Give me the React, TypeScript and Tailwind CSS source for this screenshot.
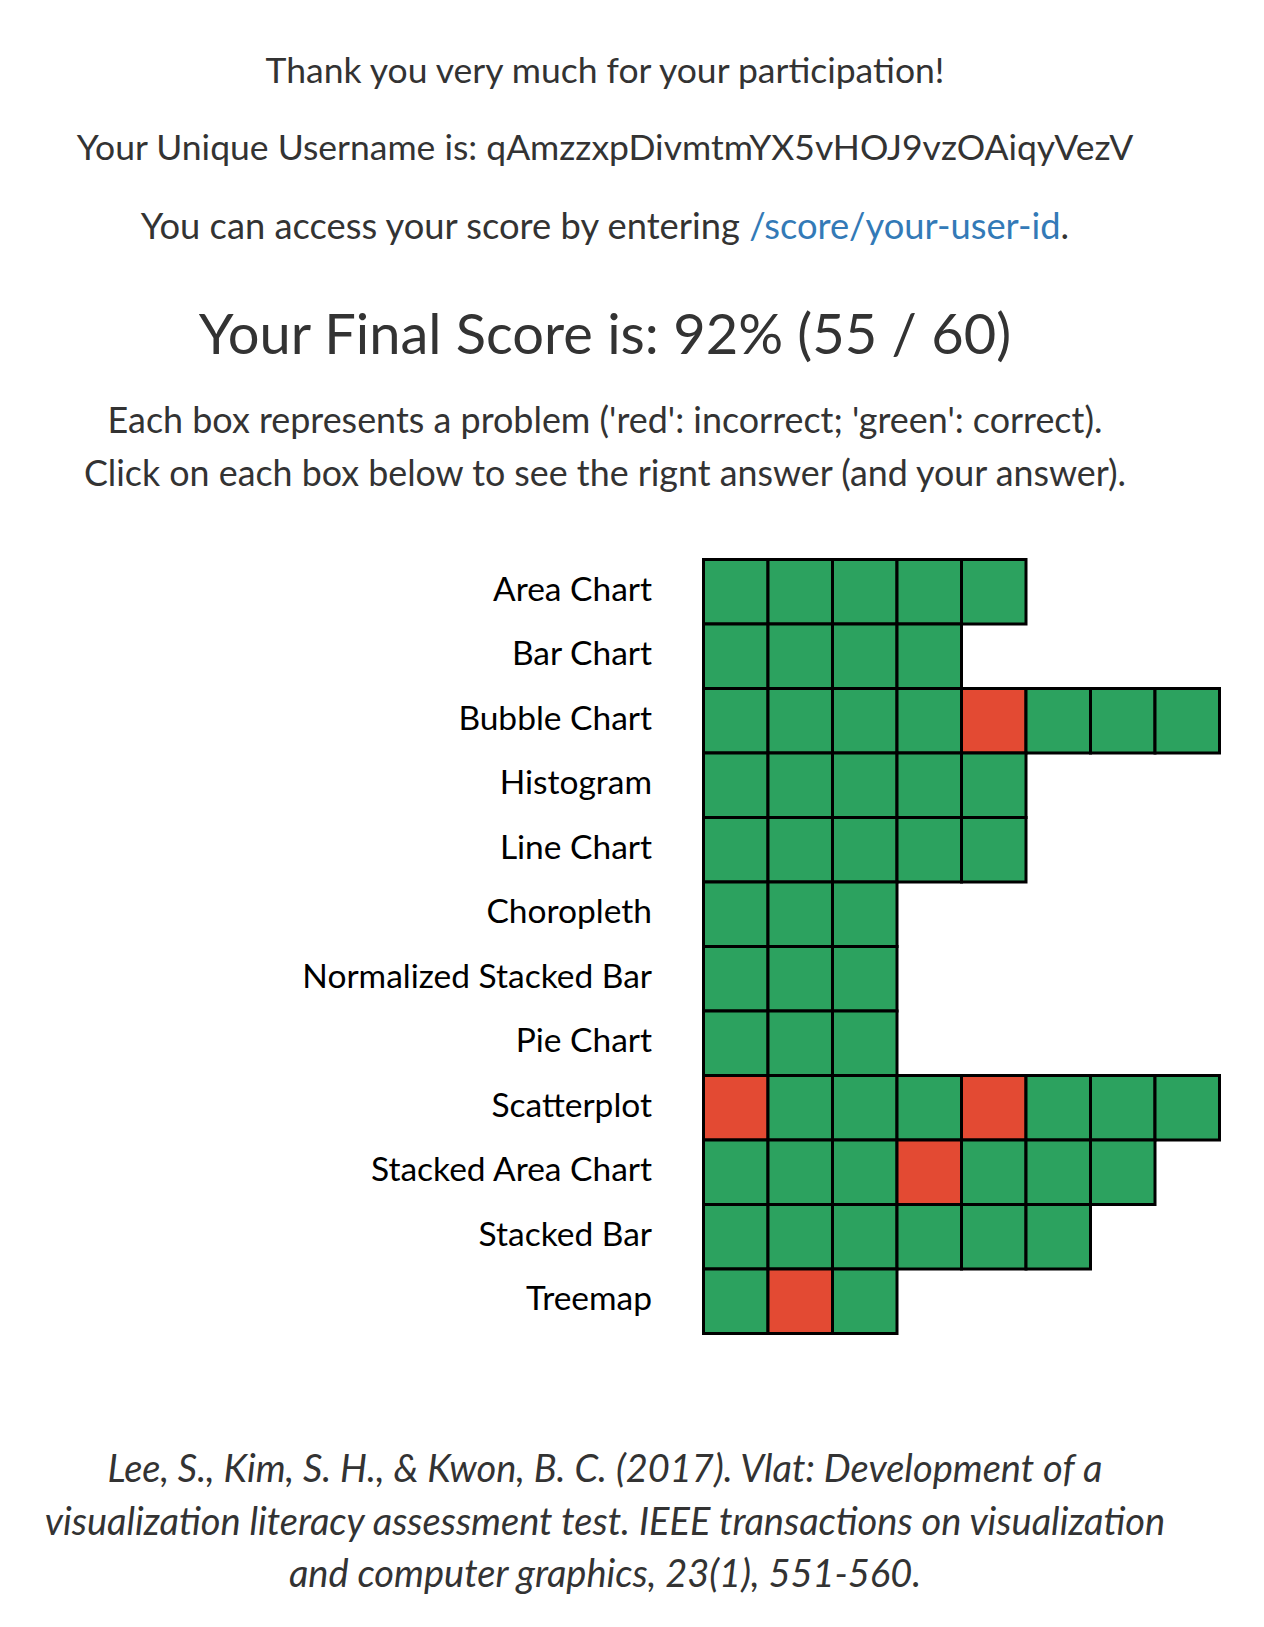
const G = "#2ca25f";
const R = "#e34a33";

const rows: { label: string; cells: string }[] = [
  { label: "Area Chart", cells: "GGGGG" },
  { label: "Bar Chart", cells: "GGGG" },
  { label: "Bubble Chart", cells: "GGGGRGGG" },
  { label: "Histogram", cells: "GGGGG" },
  { label: "Line Chart", cells: "GGGGG" },
  { label: "Choropleth", cells: "GGG" },
  { label: "Normalized Stacked Bar", cells: "GGG" },
  { label: "Pie Chart", cells: "GGG" },
  { label: "Scatterplot", cells: "RGGGRGGG" },
  { label: "Stacked Area Chart", cells: "GGGRGGG" },
  { label: "Stacked Bar", cells: "GGGGGG" },
  { label: "Treemap", cells: "GRG" },
];

const P = 64.5;

export default function App() {
  return (
    <div
      className="w-[1210px] text-[#333] text-center"
      style={{ fontFamily: "Lato, 'Open Sans', sans-serif" }}
    >
      <div className="pt-[50px] text-[35.5px] leading-[40px]">
        <span>Thank you very much for your participation!</span>
      </div>
      <div className="mt-[37px] text-[35.5px] leading-[40px]">
        <span>Your Unique Username is: qAmzzxpDivmtmYX5vHOJ9vzOAiqyVezV</span>
      </div>
      <div className="mt-[38px] text-[36.3px] leading-[40px]">
        <span>
          You can access your score by entering{" "}
          <a className="text-[#337ab7]" href="#">/score/your-user-id</a>.
        </span>
      </div>
      <h1 className="mt-[53px] text-[56px] leading-[70px]">
        <span>Your Final Score is: 92% (55 / 60)</span>
      </h1>
      <div className="mt-[32px] text-[35.9px] leading-[40px]">
        <span>Each box represents a problem ('red': incorrect; 'green': correct).</span>
      </div>
      <div className="mt-[13px] text-[35.8px] leading-[40px]">
        <span>Click on each box below to see the rignt answer (and your answer).</span>
      </div>

      <div className="mt-[65px] flex">
        <div className="ml-[252px] w-[400px] shrink-0 pt-[1.5px] flex flex-col text-black text-[33.5px]">
          {rows.map((r) => (
            <div key={r.label} className="h-[64.5px] pb-[8px] flex items-center justify-end">
              {r.label}
            </div>
          ))}
        </div>
        <svg className="ml-[50px] shrink-0" width="522" height="778" viewBox="0 0 522 778">
          {rows.map((r, ri) =>
            r.cells.split("").map((c, ci) => (
              <rect
                key={`${ri}-${ci}`}
                x={1.5 + ci * P}
                y={1.5 + ri * P}
                width={P}
                height={P}
                fill={c === "G" ? G : R}
                stroke="#000"
                strokeWidth={3}
              />
            ))
          )}
        </svg>
      </div>

      <div className="mt-[105px] italic text-[38px] leading-[52.5px]">
        Lee, S., Kim, S. H., &amp; Kwon, B. C. (2017). Vlat: Development of a
        <br />
        visualization literacy assessment test. IEEE transactions on visualization
        <br />
        and computer graphics, 23(1), 551-560.
      </div>
    </div>
  );
}
